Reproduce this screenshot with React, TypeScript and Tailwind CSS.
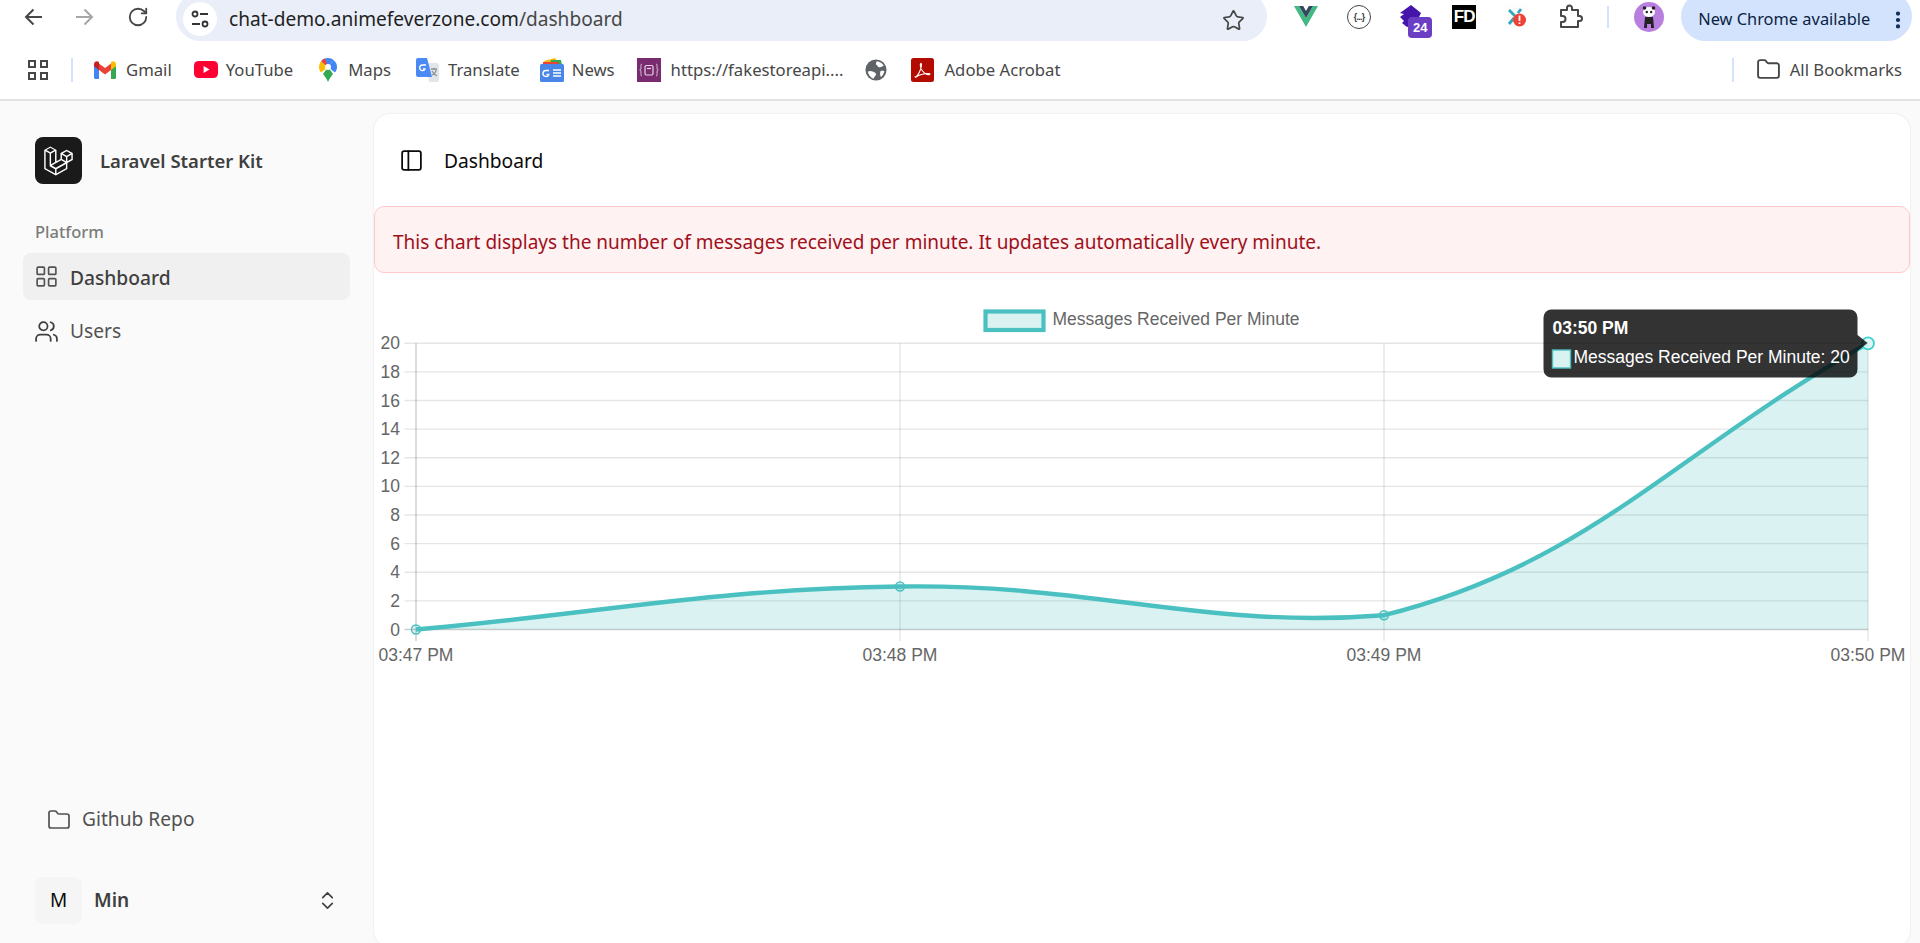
import { ChevronsUpDown, EllipsisVertical, Folder, LayoutGrid, PanelLeft, RotateCw, Star, Users } from "lucide-react";

const font = "font-['Noto_Sans','Open_Sans',sans-serif]";

const GmailIcon = () => (
    <svg width="22" height="18" viewBox="0 0 22 18" className="shrink-0">
        <path d="M0 3v13.5A1.5 1.5 0 0 0 1.5 18H5V7.5L0 3Z" fill="#4285f4" />
        <path d="M22 3v13.5a1.5 1.5 0 0 1-1.5 1.5H17V7.5L22 3Z" fill="#34a853" />
        <path d="M5 9V2.5L11 7l6-4.5V9l-6 4.5L5 9Z" fill="#ea4335" />
        <path d="M0 3.2C0 .8 2.7-.6 4.6.8L5 1.2V9L0 5.2v-2Z" fill="#c5221f" />
        <path d="M22 3.2c0-2.4-2.7-3.8-4.6-2.4l-.4.4V9l5-3.8v-2Z" fill="#fbbc04" />
    </svg>
);

const YoutubeIcon = () => (
    <svg width="24" height="17" viewBox="0 0 24 17" className="shrink-0">
        <rect width="24" height="17" rx="4.5" fill="#ff0033" />
        <path d="M9.6 5v7l6-3.5-6-3.5Z" fill="#fff" />
    </svg>
);

const MapsIcon = () => (
    <svg width="18" height="24" viewBox="0 0 18 24" className="shrink-0">
        <path d="M9 24c-1-3-3-5-5-8L9 9l5 7c-2 3-4 5-5 8Z" fill="#34a853" />
        <path d="M2 14.500C.8 13 0 11 0 9c0-2.200.8-4.300 2.200-5.800L9 9 2 14.500Z" fill="#fbbc04" />
        <path d="M2.200 3.200 9 9l5.800-6.800C13.300.8 11.300 0 9 0 6.200 0 3.900 1.200 2.200 3.200Z" fill="#4285f4" />
        <path d="M2.200 3.200A9 9 0 0 1 6 .5L9 9 2.200 3.200Z" fill="#ea4335" />
        <path d="M14.800 2.200A9 9 0 0 1 18 9c0 2-.8 4-2 5.500L9 9l5.800-6.800Z" fill="#4285f4" />
        <circle cx="9" cy="9" r="3" fill="#fff" />
    </svg>
);

const TranslateIcon = () => (
    <svg width="23" height="24" viewBox="0 0 23 24" className="shrink-0">
        <path d="M10 5h11a2 2 0 0 1 2 2v15a2 2 0 0 1-2 2h-8L10 5Z" fill="#e3e6e8" />
        <path d="M15 11h6M18 10v2M16 17c2-1 4-3 4-5M16 13c1 2 3 4 5 5" stroke="#8d9297" strokeWidth="1.300" fill="none" />
        <path d="M2 0h9l5 19H2a2 2 0 0 1-2-2V2a2 2 0 0 1 2-2Z" fill="#4a8af4" />
        <path d="M10 7H6.500a2.800 2.800 0 1 0 2.600 3.800H6.800" stroke="#fff" strokeWidth="1.300" fill="none" />
    </svg>
);

const NewsIcon = () => (
    <svg width="24" height="24" viewBox="0 0 24 24" className="shrink-0">
        <path d="M4 3 15 0l3 5H5L4 3Z" fill="#fbbc04" />
        <path d="M11 2h10l1 5H10l1-5Z" fill="#34a853" />
        <path d="M3 4h15l2 4H3V4Z" fill="#ea4335" />
        <rect y="6" width="24" height="18" rx="1.500" fill="#4a86e8" />
        <path d="M9 12.500H6a3 3 0 1 0 2.800 4H6.500" stroke="#fff" strokeWidth="1.400" fill="none" />
        <path d="M13 12h8M13 15h8M13 18h8" stroke="#fff" strokeWidth="1.400" />
    </svg>
);

const FakeStoreIcon = () => (
    <svg width="24" height="24" viewBox="0 0 24 24" className="shrink-0">
        <rect width="24" height="24" fill="#7a2a6f" />
        <path d="M5 6c-1.500 0-1 2-1 4s-1 2-1.300 2c.3 0 1.300 0 1.300 2s-.5 4 1 4M19 6c1.500 0 1 2 1 4s1 2 1.300 2c-.3 0-1.300 0-1.300 2s.5 4-1 4" stroke="#d8c2d8" fill="none" />
        <rect x="8" y="7.500" width="8" height="9.500" rx="1.500" stroke="#e6d6e6" strokeWidth="1.200" fill="none" />
        <path d="M10 10.500h4" stroke="#e6d6e6" strokeWidth="1.200" />
    </svg>
);

const GlobeIcon = () => (
    <svg width="22" height="24" viewBox="0 0 24 24" className="shrink-0">
        <circle cx="12" cy="12" r="11.500" fill="#5f6368" />
        <path d="M13 2.500c3 .5 6 2 7.500 5-2 .2-3 1.500-5 1.500-1.800 0-1.500-2-3-2.500-1-.4-.5-3 .5-4ZM3 14c2-1.500 4-1 6 0 1.500.8 3 1 3 3 0 1.500-1.500 1.500-2 3-.2.800-.4 1.500-1 1.500C6 20.500 4 17.500 3 14ZM17 13c1.500-.5 3 0 4 0-.3 2.500-1.500 5-3.500 6.500-1-1-1.500-4-.5-6.500Z" fill="#fff" />
    </svg>
);

const AdobeIcon = () => (
    <svg width="23" height="24" viewBox="0 0 23 24" className="shrink-0">
        <rect width="23" height="24" rx="2.500" fill="#b30b00" />
        <path d="M4 19.500c2-1 4-4 5.500-8 .6-1.800 1.200-5.500.6-6-.7-.4-1 1.200-.6 3 .6 3 3 6 5.500 7.500 1.300.7 3.800.9 4 .2.100-.8-2.400-.9-5-.5-3 .5-6.500 1.500-8 2.800-1 .8-2 .8-2-.2" stroke="#fff" strokeWidth="1.100" fill="none" />
    </svg>
);

const VueIcon = () => (
    <svg width="24" height="21" viewBox="0 0 24 21" className="shrink-0">
        <path d="M0 0h5l7 12L19 0h5L12 21 0 0Z" fill="#42b883" />
        <path d="M5 0h4.200L12 5l2.800-5H19l-7 12L5 0Z" fill="#35495e" />
    </svg>
);

const JsonIcon = () => (
    <div className="shrink-0 w-6 h-6 rounded-full border border-[#444] bg-white flex items-center justify-center text-[8.5px] tracking-[-0.6px] font-['Liberation_Sans',sans-serif] font-bold text-[#333]">
        {"{...}"}
    </div>
);

const BadgeIcon = () => (
    <div className="relative shrink-0 w-[33px] h-[38px]">
        <svg width="24" height="24" viewBox="0 0 24 24" className="absolute left-0 top-[5px]">
            <path d="M12 0 22 8 16 20 8 22 3 18 5 16 1 12 5 9 1 8 12 0Z" fill="#4515ab" />
        </svg>
        <div className="absolute right-0 bottom-0 w-[24px] h-[21px] rounded-[4px] bg-[#6b3fc4] text-white text-[13px] font-bold leading-[21px] text-center font-['Liberation_Sans',sans-serif]">
            24
        </div>
    </div>
);

const FdIcon = () => (
    <div className="shrink-0 w-6 h-6 bg-black text-white text-[17px] font-black leading-6 text-center tracking-[-1px] font-['Liberation_Sans',sans-serif]">
        FD
    </div>
);

const AlertExtIcon = () => (
    <svg width="24" height="24" viewBox="0 0 24 24" className="shrink-0">
        <rect width="24" height="24" fill="#fdfdfd" />
        <path d="M5 5l6 6M17 4l-3 4M5 19l5-6" stroke="#2aa9bd" strokeWidth="2.800" />
        <circle cx="15.500" cy="15" r="6.500" fill="#ef4135" />
        <path d="M15.500 10.500v5.500M15.500 17.500v1.500" stroke="#fff" strokeWidth="1.800" />
    </svg>
);

const PuzzleIcon = () => (
    <svg width="24" height="26" viewBox="0 0 24 26" fill="none" stroke="#474747" strokeWidth="2" strokeLinejoin="round" className="shrink-0">
        <path d="M2 7h6V5a2.500 2.500 0 0 1 5 0v2h6v6h1.500a2.500 2.500 0 0 1 0 5H19v6H2v-5h1.500a3 3 0 0 0 0-6H2V7Z" />
    </svg>
);

const AvatarIcon = () => (
    <svg width="30" height="30" viewBox="0 0 30 30" className="shrink-0">
        <circle cx="15" cy="15" r="15" fill="#b97fe0" />
        <ellipse cx="15" cy="10" rx="6" ry="5" fill="#fff" />
        <circle cx="10.500" cy="6" r="1.800" fill="#222" />
        <circle cx="19.500" cy="6" r="1.800" fill="#222" />
        <circle cx="12.800" cy="10" r="1.200" fill="#222" />
        <circle cx="17.200" cy="10" r="1.200" fill="#222" />
        <path d="M11 15h8l1 11h-3v-4h-4v4h-3l1-11Z" fill="#222" />
    </svg>
);

const LaravelLogo = () => (
    <svg width="29" height="30" viewBox="0 0 40 42" fill="#fff">
        <path
            fillRule="evenodd"
            clipRule="evenodd"
            d="M17.2 5.633 8.6.855 0 5.633v26.51l16.2 9 16.2-9v-8.442l7.6-4.223V9.856l-8.6-4.777-8.6 4.777V18.3l-5.6 3.111V5.633ZM38 18.301l-5.6 3.11v-6.157l5.6-3.11V18.3Zm-1.06-7.856-5.54 3.078-5.54-3.079 5.54-3.078 5.54 3.079ZM24.8 18.3v-6.157l5.6 3.111v6.158L24.8 18.3Zm-1 1.732 5.54 3.078-13.14 7.3-5.54-3.078 13.14-7.3ZM14.14 5.633 8.6 8.71 3.06 5.633 8.6 2.555l5.54 3.078ZM2 7.332l5.6 3.11v17.74l7.6 4.22v6.16L2 31.2V7.332Zm7.6 3.11 5.6-3.11v15.24l-5.6 3.11V10.44Zm7.6 21.96 13.2-7.33v6.13l-13.2 7.36V32.400Z"
        />
    </svg>
);

const Bookmark = ({ icon, label, className }: { icon: React.ReactNode; label?: string; className?: string }) => (
    <div className={`flex items-center ${className ?? ""}`}>
        {icon}
        {label && <span className="text-[16.7px] text-[#474747] whitespace-nowrap">{label}</span>}
    </div>
);

const BrowserBar = () => (
    <div className={`shrink-0 bg-white border-b-2 border-[#e3e3e3] ${font}`}>
        <div className="h-[41px] flex items-start overflow-hidden">
            <svg width="18" height="18" viewBox="0 0 18 18" fill="none" stroke="#474747" strokeWidth="2" className="ml-[24px] mt-[8px] shrink-0">
                <path d="M18 9H2M9.500 1.500 2 9l7.500 7.500" />
            </svg>
            <svg width="18" height="18" viewBox="0 0 18 18" fill="none" stroke="#a6a6a6" strokeWidth="2" className="ml-[34px] mt-[8px] shrink-0">
                <path d="M0 9h16M8.500 1.500 16 9l-7.500 7.500" />
            </svg>
            <RotateCw size={22} strokeWidth={2} className="ml-[33px] mt-[6px] text-[#474747]" />
            <div className="ml-[27px] -mt-[8px] w-[1092px] h-[49px] rounded-full bg-[#e9eef8] flex items-center pl-[7px] pr-[22px]">
                <div className="w-[34px] h-[34px] rounded-full bg-white flex items-center justify-center mt-[4px]">
                    <svg width="20" height="20" viewBox="0 0 20 20" fill="none" stroke="#333" strokeWidth="1.800">
                        <circle cx="5" cy="5" r="2.500" />
                        <path d="M10 5h8M2 15h8" />
                        <circle cx="15" cy="15" r="2.500" />
                    </svg>
                </div>
                <span className="ml-[12px] mt-[5px] text-[19.1px] text-[#1f1f1f]">
                    chat-demo.animefeverzone.com<span className="text-[#474747]">/dashboard</span>
                </span>
                <Star size={23} strokeWidth={1.800} className="ml-auto mt-[7px] text-[#474747]" />
            </div>
            <div className="ml-[27px] mt-[6px]"><VueIcon /></div>
            <div className="ml-[29px] mt-[5px]"><JsonIcon /></div>
            <div className="ml-[28px] mt-[0px]"><BadgeIcon /></div>
            <div className="ml-[20px] mt-[5px]"><FdIcon /></div>
            <div className="ml-[28px] mt-[5px]"><AlertExtIcon /></div>
            <div className="ml-[31px] mt-[3px]"><PuzzleIcon /></div>
            <div className="ml-[24px] mt-[6px] w-[2px] h-[22px] bg-[#d3e3fd]" />
            <div className="ml-[25px] mt-[2px]"><AvatarIcon /></div>
            <div className="ml-[17px] -mt-[8px] w-[231px] h-[49px] rounded-full bg-[#d3e3fd] flex items-center pl-[17px] mr-[8px]">
                <span className="mt-[6px] text-[16.4px] text-[#0b1f44] whitespace-nowrap">New Chrome available</span>
                <EllipsisVertical size={22} strokeWidth={2.600} className="ml-[17px] mt-[6px] text-[#0b2a55]" />
            </div>
        </div>
        <div className="h-[58px] flex items-center">
            <div className="ml-[28px] grid grid-cols-2 gap-[4px]">
                <div className="w-[8px] h-[8px] border-2 border-[#474747]" />
                <div className="w-[8px] h-[8px] border-2 border-[#474747]" />
                <div className="w-[8px] h-[8px] border-2 border-[#474747]" />
                <div className="w-[8px] h-[8px] border-2 border-[#474747]" />
            </div>
            <div className="ml-[23px] w-[2px] h-[24px] bg-[#d3e3fd]" />
            <Bookmark className="ml-[21px] gap-[10px]" icon={<GmailIcon />} label="Gmail" />
            <Bookmark className="ml-[22px] gap-[8px]" icon={<YoutubeIcon />} label="YouTube" />
            <Bookmark className="ml-[26px] gap-[11px]" icon={<MapsIcon />} label="Maps" />
            <Bookmark className="ml-[25px] gap-[9px]" icon={<TranslateIcon />} label="Translate" />
            <Bookmark className="ml-[20px] gap-[8px]" icon={<NewsIcon />} label="News" />
            <Bookmark className="ml-[22px] gap-[10px]" icon={<FakeStoreIcon />} label="https://fakestoreapi...." />
            <Bookmark className="ml-[22px]" icon={<GlobeIcon />} />
            <Bookmark className="ml-[24px] gap-[10px]" icon={<AdobeIcon />} label="Adobe Acrobat" />
            <div className="ml-auto w-[2px] h-[24px] bg-[#d3e3fd]" />
            <Bookmark className="ml-[22px] mr-[18px] gap-[9px]" icon={<Folder size={25} strokeWidth={1.800} className="text-[#474747]" />} label="All Bookmarks" />
        </div>
    </div>
);

const Sidebar = () => (
    <aside className={`shrink-0 w-[374px] flex flex-col ${font}`}>
        <div className="mt-[36px] ml-[35px] flex items-center gap-[18px]">
            <div className="w-[47px] h-[47px] rounded-lg bg-[#1a1a1a] flex items-center justify-center">
                <LaravelLogo />
            </div>
            <span className="text-[18.5px] font-semibold text-[#3f3f3f]">Laravel Starter Kit</span>
        </div>
        <div className="mt-[36px] ml-[35px] text-[16.5px] font-medium text-[#7c7c7c] leading-[24px]">Platform</div>
        <div className="mt-[9px] ml-[23px] w-[327px] h-[47px] rounded-lg bg-[#f0f0f0] flex items-center pl-[11px] gap-[11px]">
            <LayoutGrid size={25} strokeWidth={1.600} className="text-[#525252]" />
            <span className="text-[19.2px] font-medium text-[#404040] mt-[4px]">Dashboard</span>
        </div>
        <div className="mt-[7px] ml-[23px] h-[47px] flex items-center pl-[11px] gap-[11px]">
            <Users size={25} strokeWidth={1.700} className="text-[#404040] mt-[1px]" />
            <span className="text-[19.2px] text-[#525252] mt-[2px]">Users</span>
        </div>
        <div className="mt-auto ml-[47px] flex items-center gap-[11px] text-[#525252]">
            <Folder size={24} strokeWidth={1.700} />
            <span className="text-[19.2px]">Github Repo</span>
        </div>
        <div className="mt-[43px] mb-[19px] ml-[35px] mr-[35px] flex items-center">
            <div className="w-[47px] h-[47px] rounded-lg bg-[#f5f5f5] flex items-center justify-center text-[19px] text-[#0a0a0a]">M</div>
            <span className="ml-[12px] text-[19px] font-semibold text-[#3f3f3f]">Min</span>
            <ChevronsUpDown size={23} strokeWidth={1.700} className="ml-auto text-[#404040]" />
        </div>
    </aside>
);

const chartFont = "'Liberation Sans', Arial, sans-serif";
const yTicks = [0, 2, 4, 6, 8, 10, 12, 14, 16, 18, 20];
const xTicks = [
    { x: 415.5, label: "03:47 PM" },
    { x: 899.5, label: "03:48 PM" },
    { x: 1383.5, label: "03:49 PM" },
    { x: 1867.5, label: "03:50 PM" },
];
const linePath =
    "M415.5 629.5C609.1 612.3 705.7 589.4 899.5 586.5C1092.900 583.600 1203 629.500 1383.500 615.200C1590.200 563.300 1673.900 452.100 1867.500 343.300";
const points = [
    [415.5, 629.5],
    [899.5, 586.5],
    [1383.5, 615.2],
];

const MessagesChart = () => (
    <svg width="1536" height="420" viewBox="373.5 273 1536 420" className="block" fontFamily={chartFont}>
        <rect x="985" y="311.500" width="58" height="18.500" fill="rgba(75,192,192,0.2)" stroke="#4bc0c0" strokeWidth="4.200" />
        <text x="1052" y="325" fontSize="17.500" fill="#666">Messages Received Per Minute</text>

        {yTicks.map((t) => {
            const y = 629.5 - t * 14.31;
            return (
                <g key={t}>
                    <line x1="404" x2="1867.5" y1={y} y2={y} stroke="#000" strokeOpacity={t === 0 ? 0.2 : 0.1} strokeWidth="1.400" />
                    <text x="399.500" y={y + 6} fontSize="17.500" fill="#666" textAnchor="end">{t}</text>
                </g>
            );
        })}
        {xTicks.map((t, i) => (
            <g key={t.label}>
                <line x1={t.x} x2={t.x} y1="343.300" y2="641" stroke="#000" strokeOpacity={i === 0 ? 0.2 : 0.1} strokeWidth="1.400" />
                <text x={t.x} y="661" fontSize="17.500" fill="#666" textAnchor="middle">{t.label}</text>
            </g>
        ))}

        <path d={`${linePath}L1867.500 629.500L415.500 629.500Z`} fill="rgba(75,192,192,0.2)" />
        <path d={linePath} fill="none" stroke="#4bc0c0" strokeWidth="4.400" />
        {points.map(([x, y]) => (
            <circle key={x} cx={x} cy={y} r="4.500" fill="rgba(75,192,192,0.2)" stroke="#4bc0c0" strokeWidth="1.400" />
        ))}
        <circle cx="1867.500" cy="343.300" r="6" fill="rgba(220,245,245,0.9)" stroke="#3fd0d0" strokeWidth="1.800" />

        <path
            d="M1551 309.500H1849a8 8 0 0 1 8 8V335l10 8-10 8v18.500a8 8 0 0 1-8 8H1551a8 8 0 0 1-8-8V317.500a8 8 0 0 1 8-8Z"
            fill="rgba(0,0,0,0.8)"
        />
        <text x="1552" y="334" fontSize="17.500" fontWeight="700" fill="#fff">03:50 PM</text>
        <rect x="1552" y="350" width="18" height="18" fill="#d9f2f2" stroke="#4bc0c0" strokeWidth="1.400" />
        <text x="1573" y="363" fontSize="17.500" fill="#fff">Messages Received Per Minute: 20</text>
    </svg>
);

const App = () => {
    return (
        <div className="h-screen flex flex-col overflow-hidden bg-[#fafafa]">
            <BrowserBar />
            <div className="flex-1 flex min-h-0">
                <Sidebar />
                <main className={`mt-[13px] w-[1536px] rounded-[16px] bg-white shadow-[0_0_2px_rgba(0,0,0,0.12)] -mb-[4px] overflow-hidden ${font}`}>
                    <div className="h-[92px] flex items-center pl-[25px] gap-[20px]">
                        <PanelLeft size={25} strokeWidth={1.700} className="text-[#0a0a0a]" />
                        <span className="text-[19.2px] text-[#0a0a0a] mt-[2px]">Dashboard</span>
                    </div>
                    <div className="h-[67px] rounded-[10px] border border-[#ffc9c9] bg-[#fef2f2] flex items-center pl-[18px] pt-[6px] text-[19px] text-[#a10f1a]">
                        This chart displays the number of messages received per minute. It updates automatically every minute.
                    </div>
                    <MessagesChart />
                </main>
            </div>
        </div>
    );
};

export default App;
